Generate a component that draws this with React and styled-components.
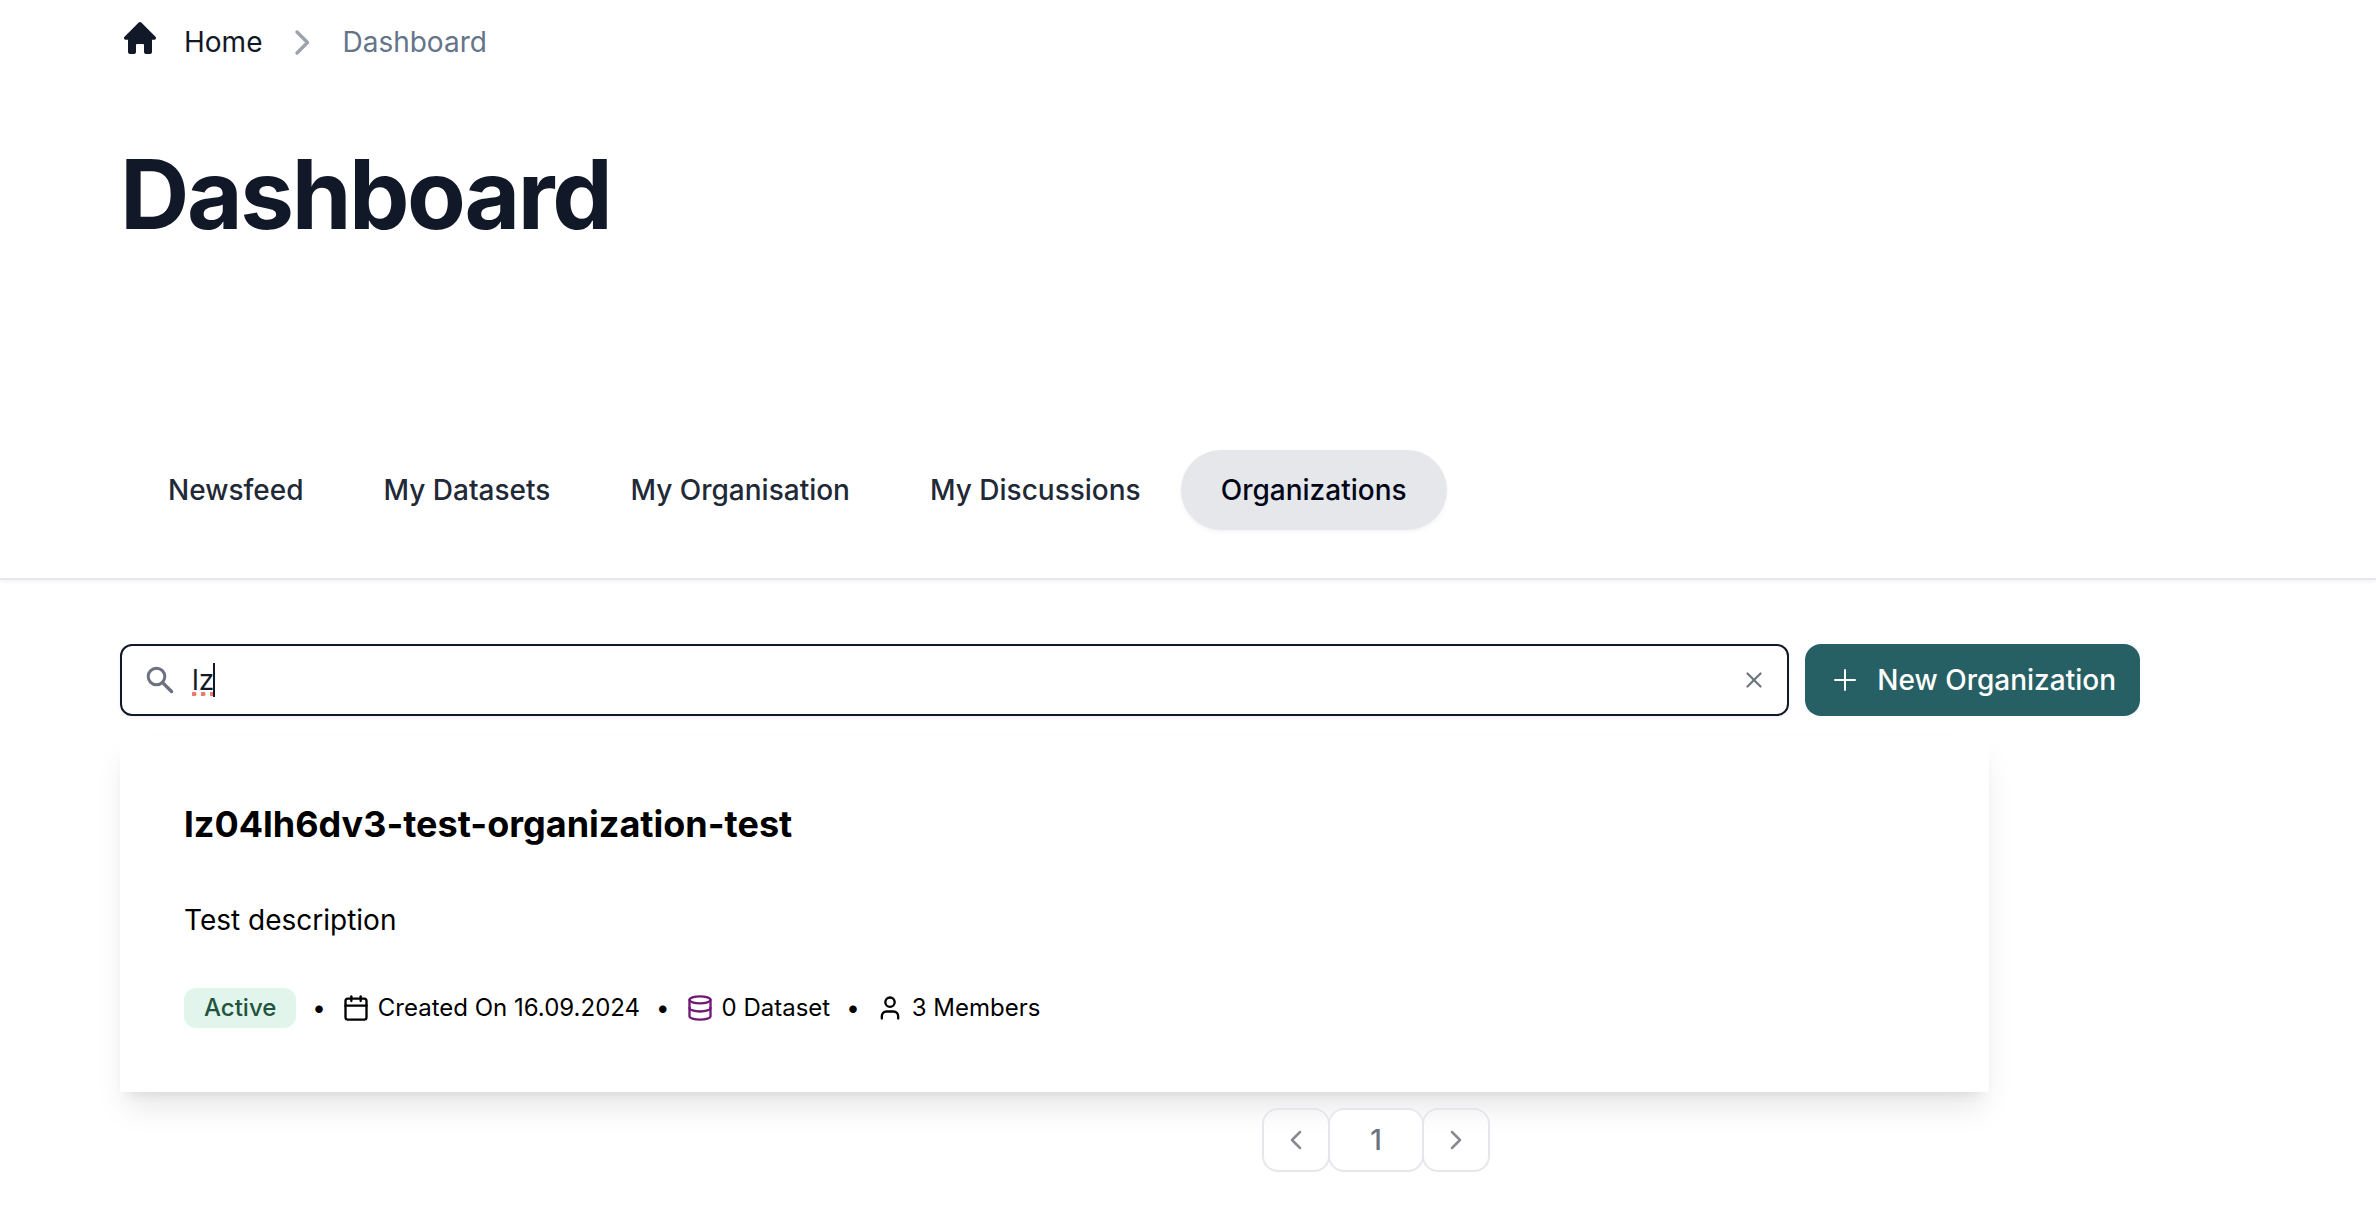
import React, { useState } from 'react';
import styled, { createGlobalStyle } from 'styled-components';
import { Calendar, Database, User, X } from 'lucide-react';

const GlobalStyle = createGlobalStyle`
  *, *::before, *::after { box-sizing: border-box; }
  body {
    margin: 0;
    background: #fff;
    color: #000;
    font-family: Inter, "Liberation Sans", sans-serif;
    font-size: 28px;
    line-height: 40px;
    -webkit-font-smoothing: antialiased;
  }
  h1, h2, p, ol, ul { margin: 0; padding: 0; }
  ol, ul { list-style: none; }
  button, input { font: inherit; }
`;

const Header = styled.header`
  padding: 20px 120px 0;
`;

const Crumbs = styled.ol`
  display: flex;
  align-items: center;
  height: 44px;
`;

const Crumb = styled.li`
  display: flex;
  align-items: center;
`;

const CrumbLink = styled.a`
  display: flex;
  align-items: center;
  gap: 24px;
  color: ${(p) => (p.$muted ? '#64748b' : '#111827')};
  text-decoration: none;
`;

const HomeIcon = styled.svg`
  width: 40px;
  height: 40px;
  margin-bottom: 8px;
`;

const CrumbChevron = styled.svg`
  width: 40px;
  height: 40px;
  margin: 0 20px;
`;

const Title = styled.h1`
  margin-top: 82px;
  color: #111827;
  font-size: 96px;
  line-height: 96px;
  font-weight: 700;
  letter-spacing: -0.025em;
`;

const TabBar = styled.nav`
  display: flex;
  margin-top: 208px;
  padding: 0 128px 48px;
  border-bottom: 2px solid #e5e7eb;
  box-shadow: 0 2px 4px rgba(0, 0, 0, 0.05);
`;

const Tab = styled.button`
  height: 80px;
  padding: 0 40px;
  border: 0;
  border-radius: 40px;
  font-weight: 500;
  cursor: pointer;
  color: ${(p) => (p.$active ? '#020617' : '#1f2937')};
  background: ${(p) => (p.$active ? '#e5e7eb' : 'transparent')};
  box-shadow: ${(p) => (p.$active ? '0 2px 4px rgba(0, 0, 0, 0.05)' : 'none')};
`;

const Main = styled.main`
  padding: 64px 120px;
`;

const Toolbar = styled.div`
  display: flex;
  gap: 16px;
  margin-right: 116px;
`;

const SearchBox = styled.label`
  position: relative;
  display: flex;
  flex: 1;
  align-items: center;
  height: 72px;
  padding: 0 20px;
  border: 2px solid #111827;
  border-radius: 12px;
  box-shadow: 0 2px 4px rgba(0, 0, 0, 0.05);
`;

const SearchIcon = styled.svg`
  width: 36px;
  height: 36px;
`;

const SearchInput = styled.input`
  flex: 1;
  min-width: 0;
  padding: 0 14px;
  border: 0;
  outline: 0;
  background: transparent;
  color: #111827;
`;

const Caret = styled.span`
  position: absolute;
  left: 70px;
  top: 17px;
  width: 23px;
  height: 34px;
  border-right: 2px solid #111827;
  background: radial-gradient(circle at 2px 2px, #f0776c 2px, transparent 3px) 0 29px / 9px 4px repeat-x;
  pointer-events: none;
`;

const ClearButton = styled.button`
  display: flex;
  padding: 0;
  border: 0;
  background: none;
  color: #6b7280;
  cursor: pointer;
`;

const NewButton = styled.button`
  display: flex;
  align-items: center;
  gap: 16px;
  height: 72px;
  padding: 0 24px;
  border: 0;
  border-radius: 16px;
  background: #276064;
  color: #fff;
  font-weight: 500;
  white-space: nowrap;
  cursor: pointer;
`;

const PlusIcon = styled.svg`
  width: 32px;
  height: 32px;
`;

const Card = styled.article`
  width: 87.5%;
  margin-top: 20px;
  padding: 64px;
  background: #fff;
  box-shadow: 0 20px 30px -6px rgba(0, 0, 0, 0.1), 0 8px 12px -8px rgba(0, 0, 0, 0.1);
`;

const CardTitle = styled.h2`
  font-size: 36px;
  line-height: 48px;
  font-weight: 700;
`;

const Description = styled.p`
  margin-top: 52px;
`;

const Meta = styled.ul`
  display: flex;
  align-items: center;
  gap: 16px;
  margin-top: 48px;
  font-size: 24px;
`;

const MetaItem = styled.li`
  display: flex;
  align-items: center;
  gap: 8px;
`;

const Badge = styled.span`
  padding: 0 20px;
  border-radius: 12px;
  background: #e1f5ec;
  color: #22543d;
  font-weight: 500;
`;

const Pagination = styled.nav`
  display: flex;
  justify-content: center;
  margin: 16px 0 0 376px;
`;

const PageButton = styled.button`
  display: flex;
  align-items: center;
  justify-content: center;
  width: ${(p) => (p.$current ? '96px' : '68px')};
  height: 64px;
  padding: 0;
  border: 2px solid #e5e7eb;
  border-radius: 16px;
  background: ${(p) => (p.$current ? '#fff' : 'transparent')};
  color: #6b7280;
  font-weight: 500;
  cursor: pointer;

  & + & {
    margin-left: -2px;
  }
`;

const PageChevron = styled.svg`
  width: 28px;
  height: 28px;
`;

const tabs = ['Newsfeed', 'My Datasets', 'My Organisation', 'My Discussions', 'Organizations'];

export default function App() {
  const [active, setActive] = useState('Organizations');
  const [query, setQuery] = useState('lz');

  return (
    <>
      <GlobalStyle />
      <Header>
        <nav aria-label="Breadcrumb">
          <Crumbs>
            <Crumb>
              <CrumbLink href="#home">
                <HomeIcon viewBox="0 0 40 40" fill="#111827" aria-hidden="true">
                  <path d="M18.700 4.600a1.900 1.900 0 0 1 2.600 0l14.200 14.200a1.700 1.700 0 0 1-1.200 2.900H32V34a2 2 0 0 1-2 2h-4a2 2 0 0 1-2-2v-7a1 1 0 0 0-1-1h-6a1 1 0 0 0-1 1v7a2 2 0 0 1-2 2h-4a2 2 0 0 1-2-2V21.700H5.700a1.700 1.700 0 0 1-1.200-2.900z" />
                </HomeIcon>
                Home
              </CrumbLink>
            </Crumb>
            <Crumb>
              <CrumbChevron viewBox="0 0 40 40" fill="none" stroke="#9ca3af" strokeWidth="3.4" strokeLinecap="round" strokeLinejoin="round" aria-hidden="true">
                <path d="M15 10l10.500 10.500L15 31" />
              </CrumbChevron>
              <CrumbLink href="#dashboard" $muted>Dashboard</CrumbLink>
            </Crumb>
          </Crumbs>
        </nav>
        <Title>Dashboard</Title>
      </Header>

      <TabBar aria-label="Sections">
        {tabs.map((name) => (
          <Tab key={name} $active={name === active} onClick={() => setActive(name)}>
            {name}
          </Tab>
        ))}
      </TabBar>

      <Main>
        <Toolbar>
          <SearchBox>
            <SearchIcon viewBox="0 0 36 36" fill="none" stroke="#6b7280" strokeWidth="3" strokeLinecap="round" aria-hidden="true">
              <circle cx="14.500" cy="14.500" r="8.300" />
              <path d="M20.600 20.600l8.900 8.900" strokeWidth="3.400" />
            </SearchIcon>
            <SearchInput aria-label="Search organizations" value={query} onChange={(e) => setQuery(e.target.value)} />
            {query === 'lz' && <Caret />}
            <ClearButton aria-label="Clear search" onClick={() => setQuery('')}>
              <X size={26} />
            </ClearButton>
          </SearchBox>
          <NewButton>
            <PlusIcon viewBox="0 0 24 24" fill="none" stroke="currentColor" strokeWidth="1.5" strokeLinecap="round" aria-hidden="true">
              <path d="M12 4.500v15M4.500 12h15" />
            </PlusIcon>
            New Organization
          </NewButton>
        </Toolbar>

        <Card>
          <CardTitle>lz04lh6dv3-test-organization-test</CardTitle>
          <Description>Test description</Description>
          <Meta>
            <MetaItem><Badge>Active</Badge></MetaItem>
            <li aria-hidden="true">•</li>
            <MetaItem><Calendar size={28} />Created On 16.09.2024</MetaItem>
            <li aria-hidden="true">•</li>
            <MetaItem><Database size={28} color="#701a75" strokeWidth={2} />0 Dataset</MetaItem>
            <li aria-hidden="true">•</li>
            <MetaItem><User size={28} />3 Members</MetaItem>
          </Meta>
        </Card>

        <Pagination aria-label="Pagination">
          <PageButton aria-label="Previous page">
            <PageChevron viewBox="0 0 28 28" fill="none" stroke="#868a91" strokeWidth="2.500" strokeLinecap="round" strokeLinejoin="round">
              <path d="M18 6l-8 8 8 8" />
            </PageChevron>
          </PageButton>
          <PageButton $current aria-current="page">1</PageButton>
          <PageButton aria-label="Next page">
            <PageChevron viewBox="0 0 28 28" fill="none" stroke="#868a91" strokeWidth="2.500" strokeLinecap="round" strokeLinejoin="round">
              <path d="M10 6l8 8-8 8" />
            </PageChevron>
          </PageButton>
        </Pagination>
      </Main>
    </>
  );
}
